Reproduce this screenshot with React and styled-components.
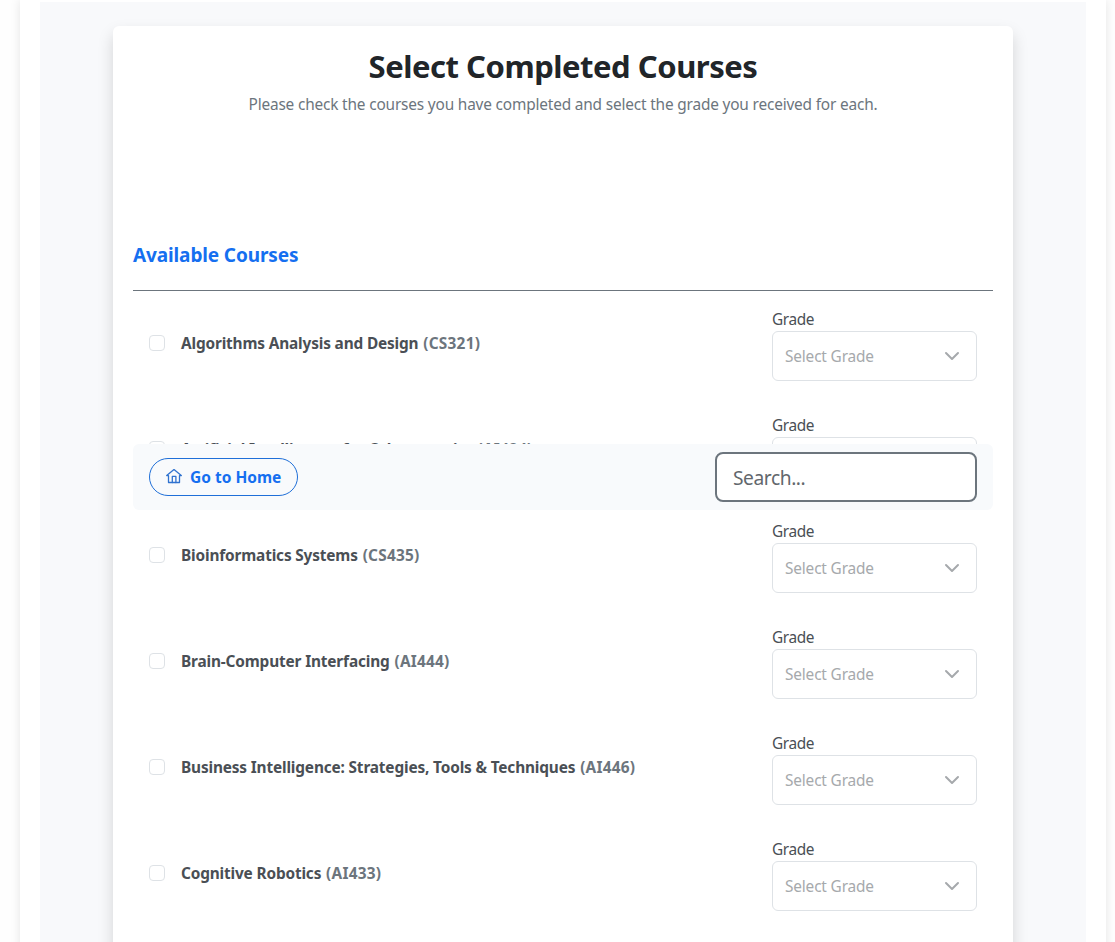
import React from "react";
import styled, { createGlobalStyle } from "styled-components";

const GlobalStyle = createGlobalStyle`
  * { box-sizing: border-box; }
  html, body { margin: 0; height: 942px; overflow: hidden; background: #fefefe; }
  body { font-family: "Noto Sans", "Open Sans", sans-serif; font-size: 15.4px; line-height: 26px; color: #212529; }
`;

const Page = styled.div`
  height: 942px;
  padding: 0 9px 0 20px;
  overflow: hidden;
`;

const Panel = styled.div`
  height: 1000px;
  padding: 2px 20px 0;
  background: #fff;
  box-shadow: 0 0 10px rgba(0, 0, 0, 0.1);
`;

const Backdrop = styled.main`
  height: 100%;
  padding: 24px 73px 0;
  background: #f8f9fb;
`;

const Card = styled.section`
  position: relative;
  height: 100%;
  padding: 22px 20px 0;
  background: #fff;
  border-radius: 6px;
  box-shadow: 0 8px 16px rgba(0, 0, 0, 0.15);
`;

const Header = styled.header`
  height: 195px;
  text-align: center;
`;

const Title = styled.h1`
  margin: 0;
  padding-bottom: 8px;
  font-size: 31px;
  line-height: 36px;
  font-weight: 700;
  letter-spacing: -0.47px;
`;

const Subtitle = styled.p`
  margin: 0;
  color: #6c757d;
  letter-spacing: -0.17px;
`;

const SectionTitle = styled.h2`
  margin: 0;
  height: 48px;
  border-bottom: 1px solid #6c757d;
  font-size: 19px;
  line-height: 24px;
  font-weight: 700;
  letter-spacing: -0.12px;
  color: #156ff0;
`;

const CourseRow = styled.div`
  display: flex;
  align-items: flex-start;
  height: 106px;
  padding: 16px 16px 0;
`;

const Checkbox = styled.span`
  width: 16px;
  height: 16px;
  margin: 28px 16px 0 0;
  border: 1px solid #dee2e6;
  border-radius: 4px;
`;

const CourseName = styled.span`
  flex: 1;
  height: 24px;
  margin-top: 24px;
  font-weight: 700;
  letter-spacing: -0.16px;
  color: #4a4f55;
`;

const CourseCode = styled.span`
  margin-left: 1px;
  letter-spacing: 0.23px;
  color: #6c757d;
`;

const GradeField = styled.div`
  width: 205px;
`;

const GradeLabel = styled.div`
  height: 24px;
  letter-spacing: -0.4px;
  color: #4a4f55;
`;

const GradeSelect = styled.div`
  display: flex;
  align-items: center;
  justify-content: space-between;
  height: 50px;
  padding: 0 16px 0 12px;
  border: 1px solid #dee2e6;
  border-radius: 6px;
  letter-spacing: -0.16px;
  color: #a6a9ac;

  span { padding-top: 2px; }
`;

const Toolbar = styled.div`
  position: absolute;
  top: 418px;
  left: 20px;
  right: 20px;
  display: flex;
  align-items: center;
  justify-content: space-between;
  height: 66px;
  padding: 0 16px;
  background: #f8fafc;
  border-radius: 6px;
`;

const HomeButton = styled.button`
  display: flex;
  align-items: center;
  gap: 8px;
  width: 149px;
  height: 38px;
  padding: 0 0 0 16px;
  border: 1px solid #1f6fd8;
  border-radius: 19px;
  background: transparent;
  color: #156ff0;
  font: 700 15.5px/24px "Noto Sans", sans-serif;
  white-space: nowrap;

  svg { flex: none; margin-top: -2px; }
`;

const SearchInput = styled.input`
  width: 262px;
  height: 50px;
  padding: 0 16px;
  border: 2px solid #6c757d;
  border-radius: 8px;
  background: #fff;
  font: 400 19.2px/30px "Noto Sans", sans-serif;
  letter-spacing: -0.43px;
  &::placeholder { color: #62676c; opacity: 1; }
`;

const Chevron = () => (
  <svg width="16" height="16" viewBox="0 0 16 16" fill="none" stroke="#a6a9ac" strokeWidth="2" strokeLinecap="round" strokeLinejoin="round">
    <path d="m2 5 6 6 6-6" />
  </svg>
);

const HomeIcon = () => (
  <svg width="16" height="16" viewBox="0 0 16 16" fill="none" stroke="#2f72cf" strokeWidth="1.3" strokeLinejoin="round" strokeLinecap="round">
    <path d="M2.5 14.5V7.6H.7L8 1.6l7.3 6h-1.8v6.9Z" />
    <path d="M6.3 14.5V8.4h3.6v6.1" />
  </svg>
);

const courses = [
  ["Algorithms Analysis and Design", "CS321"],
  ["Artificial Intelligence for Cybersecurity", "AI424"],
  ["Bioinformatics Systems", "CS435"],
  ["Brain-Computer Interfacing", "AI444"],
  ["Business Intelligence: Strategies, Tools & Techniques", "AI446"],
  ["Cognitive Robotics", "AI433"],
];

const Course = ({ name, code }) => (
  <CourseRow>
    <Checkbox />
    <CourseName>{name} <CourseCode>({code})</CourseCode></CourseName>
    <GradeField>
      <GradeLabel>Grade</GradeLabel>
      <GradeSelect><span>Select Grade</span><Chevron /></GradeSelect>
    </GradeField>
  </CourseRow>
);

export default function App() {
  return (
    <Page>
      <GlobalStyle />
      <Panel>
        <Backdrop>
          <Card>
            <Header>
              <Title>Select Completed Courses</Title>
              <Subtitle>Please check the courses you have completed and select the grade you received for each.</Subtitle>
            </Header>
            <SectionTitle>Available Courses</SectionTitle>
            {courses.map(([name, code]) => <Course key={name} name={name} code={code} />)}
            <Toolbar>
              <HomeButton><HomeIcon /><span>Go to Home</span></HomeButton>
              <SearchInput placeholder="Search..." />
            </Toolbar>
          </Card>
        </Backdrop>
      </Panel>
    </Page>
  );
}
